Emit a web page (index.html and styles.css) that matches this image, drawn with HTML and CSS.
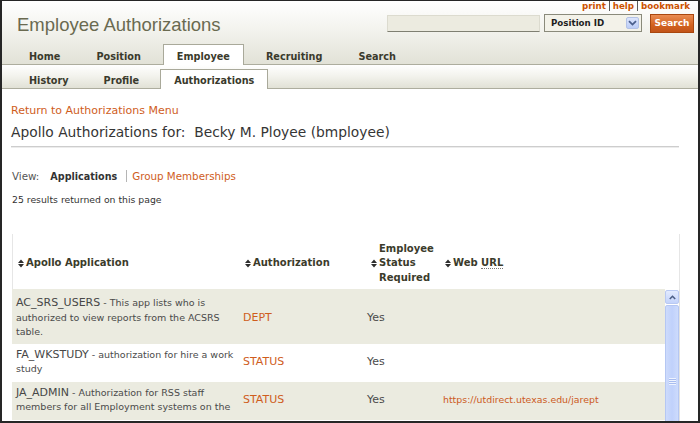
FILE: index.html
```html
<!DOCTYPE html>
<html>
<head>
<meta charset="utf-8">
<title>Employee Authorizations</title>
<link rel="stylesheet" href="styles.css">
</head>
<body>
<div class="frame">
  <div class="masthead">
    <div class="header">
      <h1 class="title">Employee Authorizations</h1>
      <div class="tools">
        <div class="util-links"><a href="#">print</a><a href="#">help</a><a href="#">bookmark</a></div>
        <div class="search-row">
          <div class="search-field"></div>
          <div class="select">
            <span class="select-text">Position ID</span>
            <span class="select-arrow"><svg width="9" height="6" viewBox="0 0 9 6"><path d="M1 1.2L4.5 4.6L8 1.2" fill="none" stroke="#4a5f8c" stroke-width="1.8"/></svg></span>
          </div>
          <div class="search-btn">Search</div>
        </div>
      </div>
    </div>
    <div class="tabs">
      <div class="tab">Home</div>
      <div class="tab">Position</div>
      <div class="tab active">Employee</div>
      <div class="tab">Recruiting</div>
      <div class="tab">Search</div>
    </div>
  </div>
  <div class="subtabs">
    <div class="subtab">History</div>
    <div class="subtab">Profile</div>
    <div class="subtab active">Authorizations</div>
  </div>

  <div class="content">
    <a class="back-link" href="#">Return to Authorizations Menu</a>
    <h2 class="page-heading">Apollo Authorizations for:&nbsp; Becky M. Ployee (bmployee)</h2>
    <div class="rule"></div>
    <div class="view-bar">
      <span class="view-label">View:</span>
      <span class="view-current">Applications</span>
      <span class="view-sep"></span>
      <a class="view-link" href="#">Group Memberships</a>
    </div>
    <p class="result-count">25 results returned on this page</p>

    <div class="grid">
      <div class="grid-head">
        <div class="hcell c1"><svg class="sort" width="6" height="9" viewBox="0 0 6 9"><path d="M0 4L3 0.6L6 4Z M0 5L3 8.4L6 5Z" fill="#2e2e2e"/></svg><span>Apollo Application</span></div>
        <div class="hcell c2"><svg class="sort" width="6" height="9" viewBox="0 0 6 9"><path d="M0 4L3 0.6L6 4Z M0 5L3 8.4L6 5Z" fill="#2e2e2e"/></svg><span>Authorization</span></div>
        <div class="hcell c3"><svg class="sort" width="6" height="9" viewBox="0 0 6 9"><path d="M0 4L3 0.6L6 4Z M0 5L3 8.4L6 5Z" fill="#2e2e2e"/></svg><span class="wrap">Employee Status Required</span></div>
        <div class="hcell c4"><svg class="sort" width="6" height="9" viewBox="0 0 6 9"><path d="M0 4L3 0.6L6 4Z M0 5L3 8.4L6 5Z" fill="#2e2e2e"/></svg><span>Web <abbr title="Uniform Resource Locator">URL</abbr></span></div>
      </div>
      <div class="grid-body">
        <table class="rows">
          <colgroup><col class="w1"><col class="w2"><col class="w3"><col class="w4"></colgroup>
          <tr class="shade first">
            <td class="app"><span class="app-code">AC_SRS_USERS</span><span class="app-desc"> - This app lists who is<br>authorized to view reports from the ACSRS<br>table.</span></td>
            <td class="auth">DEPT</td>
            <td>Yes</td>
            <td></td>
          </tr>
          <tr>
            <td class="app"><span class="app-code">FA_WKSTUDY</span><span class="app-desc"> - authorization for hire a work<br>study</span></td>
            <td class="auth">STATUS</td>
            <td>Yes</td>
            <td></td>
          </tr>
          <tr class="shade">
            <td class="app"><span class="app-code">JA_ADMIN</span><span class="app-desc"> - Authorization for RSS staff<br>members for all Employment systems on the</span></td>
            <td class="auth">STATUS</td>
            <td>Yes</td>
            <td><a class="url" href="#">https://utdirect.utexas.edu/jarept</a></td>
          </tr>
        </table>
        <div class="scrollbar">
          <div class="scroll-btn"><svg width="7" height="5" viewBox="0 0 7 5"><path d="M0.8 4L3.5 1.3L6.2 4" fill="none" stroke="#4d5f86" stroke-width="1.6"/></svg></div>
          <div class="scroll-thumb"><span class="grip"></span></div>
        </div>
      </div>
    </div>
  </div>
</div>
</body>
</html>
```
FILE: styles.css
```css
* { box-sizing: border-box; }
html, body { margin: 0; padding: 0; background: #fff; }
body { font-family: "DejaVu Sans", Verdana, sans-serif; color: #333; }
a { text-decoration: none; }

.frame {
  width: 700px;
  height: 423px;
  border: 1px solid #262626;
  border-left-width: 2px;
  border-right-width: 2px;
  border-bottom-width: 2px;
  overflow: hidden;
  background: #fff;
}

/* masthead */
.masthead {
  background: linear-gradient(#ffffff 0%, #f3f3ee 45%, #e2e2d7 100%);
  border-bottom: 1px solid #adad9e;
}
.header { display: flex; justify-content: space-between; height: 43px; }
.title {
  margin: 0;
  padding: 13px 0 0 15px;
  font: normal 18.5px/21px "Liberation Sans", Arial, sans-serif;
  color: #6a6a50;
}
.tools { display: flex; flex-direction: column; align-items: flex-end; padding-right: 4px; }
.util-links { display: flex; margin-right: 1px; font-weight: bold; font-size: 8.7px; line-height: 10px; }
.util-links a { color: #cc5200; padding: 0 3px; border-left: 1px solid #5a5a5a; }
.util-links a:first-child { border-left: 0; }

.search-row { display: flex; align-items: flex-start; margin-top: 3px; }
.search-field {
  width: 153px;
  height: 17px;
  margin-top: 1px;
  background: #ecebe0;
  border: 1px solid #dcdbcf;
  border-bottom-color: #7f7f72;
}
.select {
  display: flex;
  align-items: center;
  justify-content: space-between;
  width: 98px;
  height: 18px;
  margin-left: 4px;
  padding: 0 2px 0 6px;
  background: #f3f2e9;
  border: 1px solid #8a8a7b;
  font-weight: bold;
  font-size: 8.7px;
  color: #1e1e1e;
}
.select-arrow {
  display: flex;
  align-items: center;
  justify-content: center;
  width: 13px;
  height: 12px;
  background: linear-gradient(#dbe4fc, #bccdf6);
  border: 1px solid #b3c2e6;
  border-radius: 2px;
}
.search-btn {
  width: 44px;
  height: 19px;
  margin-left: 8px;
  background: linear-gradient(#ea8c52, #d2621f 60%, #c2541a);
  border: 1px solid #a9470f;
  color: #fff;
  font-weight: bold;
  font-size: 9px;
  line-height: 17px;
  text-align: center;
}

/* main tabs */
.tabs { display: flex; align-items: flex-start; gap: 8px; height: 20px; padding-left: 13px; }
.tab {
  height: 21px;
  margin-bottom: -1px;
  padding: 6px 13px 0;
  border: 1px solid transparent;
  border-bottom: 0;
  font-weight: bold;
  font-size: 9.7px;
  line-height: 12px;
  color: #3a3a2c;
}
.tab.active { background: #fff; border-color: #a9a99a; }

/* sub tabs */
.subtabs {
  display: flex;
  align-items: flex-start;
  gap: 7px;
  height: 24px;
  padding: 4px 0 0 13px;
  background: linear-gradient(#ffffff 0%, #f2f2ec 50%, #e1e1d6 100%);
  border-bottom: 1px solid #adad9e;
}
.subtab {
  height: 20px;
  margin-bottom: -1px;
  padding: 4px 13px 0;
  border: 1px solid transparent;
  border-bottom: 0;
  font-weight: bold;
  font-size: 9.7px;
  line-height: 13px;
  color: #3a3a2c;
}
.subtab.active { background: #fff; border-color: #a9a99a; }

/* content */
.content { padding: 15px 0 0 9px; }
.back-link { display: block; font-size: 11px; line-height: 14px; color: #cf5d1d; }
.page-heading { margin: 6px 0 0; font-weight: normal; font-size: 13.8px; line-height: 17px; color: #353535; }
.rule { width: 668px; height: 2px; margin-top: 5px; border-top: 1px solid #cdcdcd; border-bottom: 1px solid #ececec; }

.view-bar { display: flex; align-items: center; height: 14px; margin: 21px 0 0 1px; font-size: 10.3px; }
.view-label { color: #555; }
.view-current { margin-left: 11px; font-weight: bold; font-size: 9.6px; color: #333; }
.view-sep { width: 1px; height: 12px; margin: 0 5px 0 9px; background: #b5b5b5; }
.view-link { color: #cf5d1d; }

.result-count { margin: 11px 0 0 1px; font-size: 9.3px; line-height: 12px; color: #333; }

/* grid */
.grid { width: 668px; margin: 28px 0 0 1px; }
.grid-head {
  display: grid;
  grid-template-columns: 227px 124px 76px 1fr;
  align-items: center;
  height: 55px;
  padding-top: 4px;
  background: #fff;
  box-shadow: inset 1px 0 0 #e6e6e6, inset -1px 0 0 #e6e6e6;
}
.hcell { display: flex; align-items: center; padding-left: 6px; font-weight: bold; font-size: 10px; line-height: 14.5px; color: #3b3b2b; }
.hcell.c3 { padding-left: 8px; }
.sort { flex: none; margin-right: 2px; }
.hcell .wrap { display: block; width: 56px; }
.hcell abbr { text-decoration: none; border-bottom: 1px dotted #777; }

.grid-body { display: flex; height: 140px; overflow: hidden; }
.rows { width: 653px; flex: none; border-collapse: collapse; table-layout: fixed; align-self: flex-start; }
.rows col.w1 { width: 227px; }
.rows col.w2 { width: 124px; }
.rows col.w3 { width: 76px; }
.rows col.w4 { width: 226px; }
.rows td {
  padding: 4px 4px 5px;
  vertical-align: middle;
  font-size: 11px;
  line-height: 14.5px;
  color: #4a4a4a;
}
.rows td.app { white-space: nowrap; overflow: hidden; }
.rows tr.first td { padding-top: 7px; padding-bottom: 4px; }
.rows tr.shade td { background: #ebebe0; }
.app-code { color: #474747; }
.app-desc { font-size: 9.5px; line-height: 1; color: #4a4a4a; }
.rows td.auth { color: #cf5d1d; }
.url { font-size: 9.4px; color: #cc5a1c; }

.scrollbar {
  display: flex;
  flex-direction: column;
  width: 15px;
  flex: none;
  padding-top: 1px;
  border-right: 1px solid #e2e2e2;
  background: #fff;
}
.scroll-btn {
  display: flex;
  align-items: center;
  justify-content: center;
  height: 14px;
  background: linear-gradient(#e3ebff, #c3d3fb);
  border: 1px solid #b9c9f2;
  border-radius: 2px;
}
.scroll-thumb {
  display: flex;
  justify-content: center;
  flex: 1;
  margin-top: 1px;
  background: linear-gradient(90deg, #cddbfc, #c0d1fb 50%, #cddbfc);
  border: 1px solid #b5c7f3;
  border-radius: 2px;
}
.grip {
  width: 7px;
  height: 7px;
  margin-top: 72px;
  background: repeating-linear-gradient(#eef3ff 0 1px, #a8bcef 1px 2px);
}
```
